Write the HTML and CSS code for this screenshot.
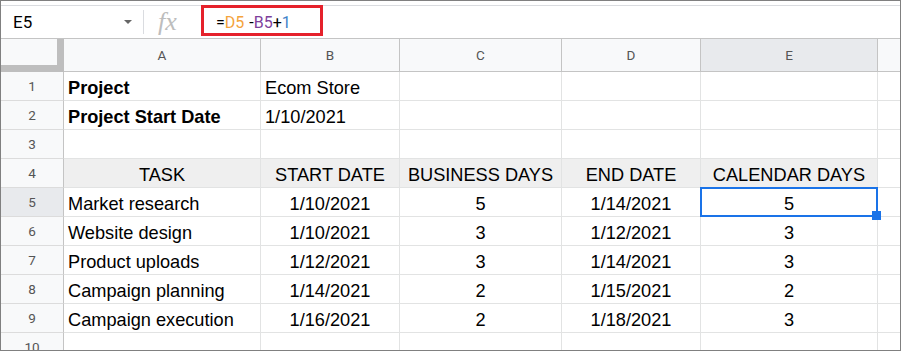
FILE: index.html
```html
<!DOCTYPE html>
<html>
<head>
    <meta charset="utf-8">
    <title>Sheet - E5</title>
    <link rel="stylesheet" href="styles.css">
</head>
<body>
    <div class="frame">
        <!--formula bar-->
        <div class="topEdge"></div>
        <div class="fbar">
            <div class="namebox"><span>E5</span><span class="caret"></span></div>
            <div class="sep"></div>
            <div class="fx">fx</div>
            <div class="formula"><span>=</span><span class="ref1">D5</span><span class="minus">-</span><span class="ref2">B5</span><span>+</span><span class="num">1</span></div>
        </div>
        <div class="callout"></div>

        <!--grid-->
        <div class="sheet">
            <div class="corner"></div>
            <div class="colhead">A</div>
            <div class="colhead">B</div>
            <div class="colhead">C</div>
            <div class="colhead">D</div>
            <div class="colhead sel">E</div>
            <div class="colhead last"></div>

            <div class="rowhead">1</div>
            <div class="cell bold">Project</div>
            <div class="cell">Ecom Store</div>
            <div class="cell"></div>
            <div class="cell"></div>
            <div class="cell"></div>
            <div class="cell last"></div>

            <div class="rowhead">2</div>
            <div class="cell bold">Project Start Date</div>
            <div class="cell">1/10/2021</div>
            <div class="cell"></div>
            <div class="cell"></div>
            <div class="cell"></div>
            <div class="cell last"></div>

            <div class="rowhead">3</div>
            <div class="cell"></div>
            <div class="cell"></div>
            <div class="cell"></div>
            <div class="cell"></div>
            <div class="cell"></div>
            <div class="cell last"></div>

            <div class="rowhead">4</div>
            <div class="cell th">TASK</div>
            <div class="cell th">START DATE</div>
            <div class="cell th">BUSINESS DAYS</div>
            <div class="cell th">END DATE</div>
            <div class="cell th">CALENDAR DAYS</div>
            <div class="cell last"></div>

            <div class="rowhead sel">5</div>
            <div class="cell">Market research</div>
            <div class="cell mid">1/10/2021</div>
            <div class="cell mid">5</div>
            <div class="cell mid">1/14/2021</div>
            <div class="cell mid active">5<span class="selbox"><span class="handle"></span></span></div>
            <div class="cell last"></div>

            <div class="rowhead">6</div>
            <div class="cell">Website design</div>
            <div class="cell mid">1/10/2021</div>
            <div class="cell mid">3</div>
            <div class="cell mid">1/12/2021</div>
            <div class="cell mid">3</div>
            <div class="cell last"></div>

            <div class="rowhead">7</div>
            <div class="cell">Product uploads</div>
            <div class="cell mid">1/12/2021</div>
            <div class="cell mid">3</div>
            <div class="cell mid">1/14/2021</div>
            <div class="cell mid">3</div>
            <div class="cell last"></div>

            <div class="rowhead">8</div>
            <div class="cell">Campaign planning</div>
            <div class="cell mid">1/14/2021</div>
            <div class="cell mid">2</div>
            <div class="cell mid">1/15/2021</div>
            <div class="cell mid">2</div>
            <div class="cell last"></div>

            <div class="rowhead">9</div>
            <div class="cell">Campaign execution</div>
            <div class="cell mid">1/16/2021</div>
            <div class="cell mid">2</div>
            <div class="cell mid">1/18/2021</div>
            <div class="cell mid">3</div>
            <div class="cell last"></div>

            <div class="rowhead">10</div>
            <div class="cell"></div>
            <div class="cell"></div>
            <div class="cell"></div>
            <div class="cell"></div>
            <div class="cell"></div>
            <div class="cell last"></div>
        </div>
    </div>
</body>
</html>
```

FILE: styles.css
```css
body {
    margin: 0;
    background-color: #ffffff;
}
.frame {
    width: 901px;
    height: 351px;
    box-sizing: border-box;
    border: 1px solid #808080;
    overflow: hidden;
    position: relative;
    font-family: Roboto, "Liberation Sans", Arial, sans-serif;
}
.topEdge {
    height: 4px;
    border-bottom: 1px solid #dadce0;
}
.fbar {
    height: 32px;
    border-bottom: 1px solid #c4c4c4;
    display: flex;
    align-items: center;
}
.namebox {
    width: 142px;
    box-sizing: border-box;
    padding: 0 11px 0 12px;
    display: flex;
    align-items: center;
    justify-content: space-between;
    font-size: 17px;
    color: #000000;
}
.caret {
    width: 0;
    height: 0;
    border-left: 4px solid transparent;
    border-right: 4px solid transparent;
    border-top: 4px solid #666666;
}
.sep {
    width: 1px;
    height: 24px;
    background-color: #dadce0;
}
.fx {
    width: 44px;
    padding-left: 14px;
    font-family: "Liberation Serif", serif;
    font-style: italic;
    font-size: 26px;
    color: #bdbdbd;
    line-height: 32px;
}
.formula {
    padding-left: 14px;
    font-size: 16px;
    color: #000000;
}
.ref1 {
    color: #f4a33b;
}
.ref2 {
    color: #7e3f9c;
}
.num {
    color: #3f83c9;
}
.minus {
    margin-left: 5px;
}
.callout {
    position: absolute;
    top: 4px;
    left: 200px;
    width: 122px;
    height: 31px;
    box-sizing: border-box;
    border: 3px solid #e5212b;
}
.sheet {
    display: grid;
    grid-template-columns: 63px 197px 139px 162px 139px 177px 1fr;
    grid-template-rows: 33px;
    grid-auto-rows: 29px;
}
.corner {
    background-color: #f8f9fa;
    border-right: 7px solid #bebebe;
    border-bottom: 7px solid #bebebe;
}
.colhead {
    background-color: #f8f9fa;
    border-right: 1px solid #c4c4c4;
    border-bottom: 1px solid #c4c4c4;
    display: flex;
    align-items: center;
    justify-content: center;
    font-size: 13.5px;
    color: #555555;
}
.colhead.sel {
    background-color: #e8eaed;
}
.colhead.last {
    border-right: none;
}
.rowhead {
    background-color: #f8f9fa;
    border-right: 1px solid #c4c4c4;
    border-bottom: 1px solid #dcdcdc;
    display: flex;
    align-items: center;
    justify-content: center;
    font-size: 13.5px;
    color: #555555;
}
.rowhead.sel {
    background-color: #e8eaed;
}
.cell {
    border-right: 1px solid #e2e3e3;
    border-bottom: 1px solid #e2e3e3;
    display: flex;
    align-items: flex-end;
    padding: 0 4px 2px;
    font-family: "Liberation Sans", Arial, sans-serif;
    font-size: 18.2px;
    line-height: 20px;
    color: #000000;
    white-space: nowrap;
}
.cell.bold {
    font-weight: bold;
}
.cell.mid {
    justify-content: center;
}
.cell.th {
    background-color: #efefef;
    justify-content: center;
}
.cell.last {
    border-right: none;
}
.cell.active {
    position: relative;
}
.selbox {
    position: absolute;
    top: -1px;
    left: -1px;
    right: -1px;
    bottom: -1px;
    border: 2px solid #1a73e8;
}
.handle {
    position: absolute;
    right: -5px;
    bottom: -5px;
    width: 9px;
    height: 9px;
    background-color: #1a73e8;
}
```
